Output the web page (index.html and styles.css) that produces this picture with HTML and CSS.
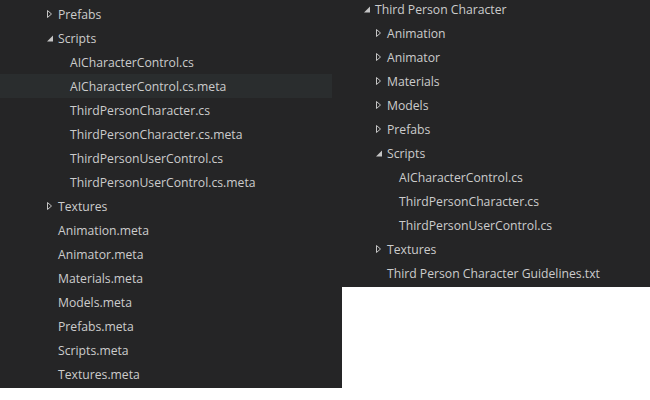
FILE: index.html
```html
<!DOCTYPE html>
<html>
<head>
<meta charset="utf-8">
<link rel="stylesheet" href="styles.css">
</head>
<body>
<div class="screen">
  <div class="panel panel-left">
    <ul class="tree">
      <li class="row l0"><span class="tw"><svg width="6" height="8" viewBox="0 0 6 8"><path class="closed" d="M0.5 0.5 L4.5 4 L0.5 7.5 Z"/></svg></span><span class="label">Prefabs</span></li>
      <li class="row l0"><span class="tw"><svg width="6" height="8" viewBox="0 0 6 8"><path class="open" d="M6 1.5 L6 7.5 L0 7.5 Z"/></svg></span><span class="label">Scripts</span></li>
      <li class="row l1"><span class="tw"></span><span class="label">AICharacterControl.cs</span></li>
      <li class="row l1 hover"><span class="tw"></span><span class="label">AICharacterControl.cs.meta</span></li>
      <li class="row l1"><span class="tw"></span><span class="label">ThirdPersonCharacter.cs</span></li>
      <li class="row l1"><span class="tw"></span><span class="label">ThirdPersonCharacter.cs.meta</span></li>
      <li class="row l1"><span class="tw"></span><span class="label">ThirdPersonUserControl.cs</span></li>
      <li class="row l1"><span class="tw"></span><span class="label">ThirdPersonUserControl.cs.meta</span></li>
      <li class="row l0"><span class="tw"><svg width="6" height="8" viewBox="0 0 6 8"><path class="closed" d="M0.5 0.5 L4.5 4 L0.5 7.5 Z"/></svg></span><span class="label">Textures</span></li>
      <li class="row l0"><span class="tw"></span><span class="label">Animation.meta</span></li>
      <li class="row l0"><span class="tw"></span><span class="label">Animator.meta</span></li>
      <li class="row l0"><span class="tw"></span><span class="label">Materials.meta</span></li>
      <li class="row l0"><span class="tw"></span><span class="label">Models.meta</span></li>
      <li class="row l0"><span class="tw"></span><span class="label">Prefabs.meta</span></li>
      <li class="row l0"><span class="tw"></span><span class="label">Scripts.meta</span></li>
      <li class="row l0"><span class="tw"></span><span class="label">Textures.meta</span></li>
    </ul>
  </div>
  <div class="panel panel-right">
    <ul class="tree tree-right">
      <li class="row r0"><span class="tw"><svg width="6" height="8" viewBox="0 0 6 8"><path class="open" d="M6 1.5 L6 7.5 L0 7.5 Z"/></svg></span><span class="label">Third Person Character</span></li>
      <li class="row r1"><span class="tw"><svg width="6" height="8" viewBox="0 0 6 8"><path class="closed" d="M0.5 0.5 L4.5 4 L0.5 7.5 Z"/></svg></span><span class="label">Animation</span></li>
      <li class="row r1"><span class="tw"><svg width="6" height="8" viewBox="0 0 6 8"><path class="closed" d="M0.5 0.5 L4.5 4 L0.5 7.5 Z"/></svg></span><span class="label">Animator</span></li>
      <li class="row r1"><span class="tw"><svg width="6" height="8" viewBox="0 0 6 8"><path class="closed" d="M0.5 0.5 L4.5 4 L0.5 7.5 Z"/></svg></span><span class="label">Materials</span></li>
      <li class="row r1"><span class="tw"><svg width="6" height="8" viewBox="0 0 6 8"><path class="closed" d="M0.5 0.5 L4.5 4 L0.5 7.5 Z"/></svg></span><span class="label">Models</span></li>
      <li class="row r1"><span class="tw"><svg width="6" height="8" viewBox="0 0 6 8"><path class="closed" d="M0.5 0.5 L4.5 4 L0.5 7.5 Z"/></svg></span><span class="label">Prefabs</span></li>
      <li class="row r1"><span class="tw"><svg width="6" height="8" viewBox="0 0 6 8"><path class="open" d="M6 1.5 L6 7.5 L0 7.5 Z"/></svg></span><span class="label">Scripts</span></li>
      <li class="row r2"><span class="tw"></span><span class="label">AICharacterControl.cs</span></li>
      <li class="row r2"><span class="tw"></span><span class="label">ThirdPersonCharacter.cs</span></li>
      <li class="row r2"><span class="tw"></span><span class="label">ThirdPersonUserControl.cs</span></li>
      <li class="row r1"><span class="tw"><svg width="6" height="8" viewBox="0 0 6 8"><path class="closed" d="M0.5 0.5 L4.5 4 L0.5 7.5 Z"/></svg></span><span class="label">Textures</span></li>
      <li class="row r1"><span class="tw"></span><span class="label">Third Person Character Guidelines.txt</span></li>
    </ul>
  </div>
</div>
</body>
</html>
```

FILE: styles.css
```css
html, body {
  margin: 0;
  padding: 0;
  background: #ffffff;
}

.screen {
  display: flex;
  align-items: flex-start;
  width: 650px;
}

.panel {
  background: #252526;
  overflow: hidden;
}

.panel-left {
  width: 342px;
  height: 388px;
}

.panel-right {
  width: 308px;
  height: 287px;
}

.tree {
  list-style: none;
  margin: 2px 0 0 0;
  padding: 0;
}

.tree-right {
  margin-top: -3px;
}

.row {
  box-sizing: border-box;
  display: flex;
  align-items: center;
  height: 24px;
  font-family: "Open Sans", "Noto Sans", sans-serif;
  font-size: 12.2px;
  color: #cccccc;
  white-space: nowrap;
}

.panel-left .row {
  width: 332px;
}

.row.hover {
  background: #2a2d2e;
}

.tw {
  display: flex;
  align-items: center;
  width: 11px;
  height: 24px;
  flex: none;
}

.tw svg {
  display: block;
}

.closed {
  fill: none;
  stroke: #c5c5c5;
  stroke-width: 1;
}

.open {
  fill: #c5c5c5;
}

.l0 { padding-left: 47px; }
.l1 { padding-left: 59px; }
.r0 { padding-left: 22px; }
.r1 { padding-left: 34px; }
.r2 { padding-left: 46px; }
```
